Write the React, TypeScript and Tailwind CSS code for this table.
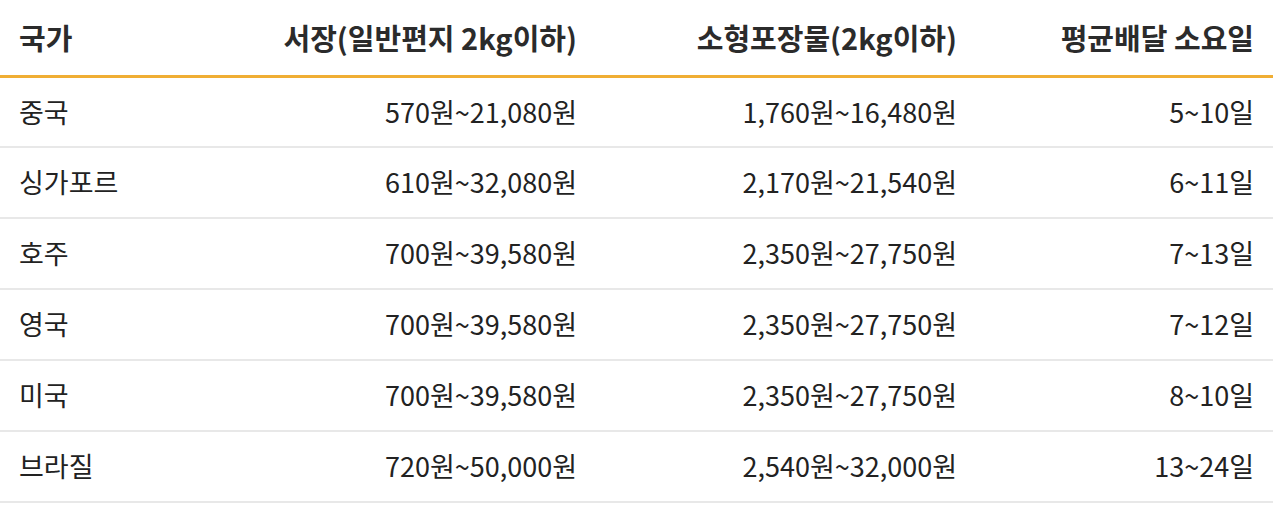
import React from 'react';

const ROWS = [
    ['중국', '570원~21,080원', '1,760원~16,480원', '5~10일'],
    ['싱가포르', '610원~32,080원', '2,170원~21,540원', '6~11일'],
    ['호주', '700원~39,580원', '2,350원~27,750원', '7~13일'],
    ['영국', '700원~39,580원', '2,350원~27,750원', '7~12일'],
    ['미국', '700원~39,580원', '2,350원~27,750원', '8~10일'],
    ['브라질', '720원~50,000원', '2,540원~32,000원', '13~24일'],
];

export default function App() {
    return (
        <div className="bg-white w-[1280px] h-[523px] text-[#222] font-['Noto_Sans_CJK_KR','Noto_Sans',sans-serif]">
            <table className="w-[1273px] table-fixed border-collapse text-[27px]">
                <colgroup>
                    <col className="w-[216px]" />
                    <col className="w-[380px]" />
                    <col className="w-[380px]" />
                    <col className="w-[297px]" />
                </colgroup>
                <thead>
                    <tr className="h-[76px] border-b-[3px] border-[#f0ae34] font-bold text-[29px] text-[#2b2b2b]">
                        <th className="px-[19px] text-left">국가</th>
                        <th className="px-[19px] text-right">서장(일반편지 2kg이하)</th>
                        <th className="px-[19px] text-right">소형포장물(2kg이하)</th>
                        <th className="px-[19px] text-right">평균배달 소요일</th>
                    </tr>
                </thead>
                <tbody>
                    {ROWS.map((row) => (
                        <tr key={row[0]} className="h-[71px] border-b-2 border-[#e8e8e8]">
                            <td className="px-[19px] text-left">{row[0]}</td>
                            <td className="px-[19px] text-right">{row[1]}</td>
                            <td className="px-[19px] text-right">{row[2]}</td>
                            <td className="px-[19px] text-right">{row[3]}</td>
                        </tr>
                    ))}
                </tbody>
            </table>
        </div>
    );
}
